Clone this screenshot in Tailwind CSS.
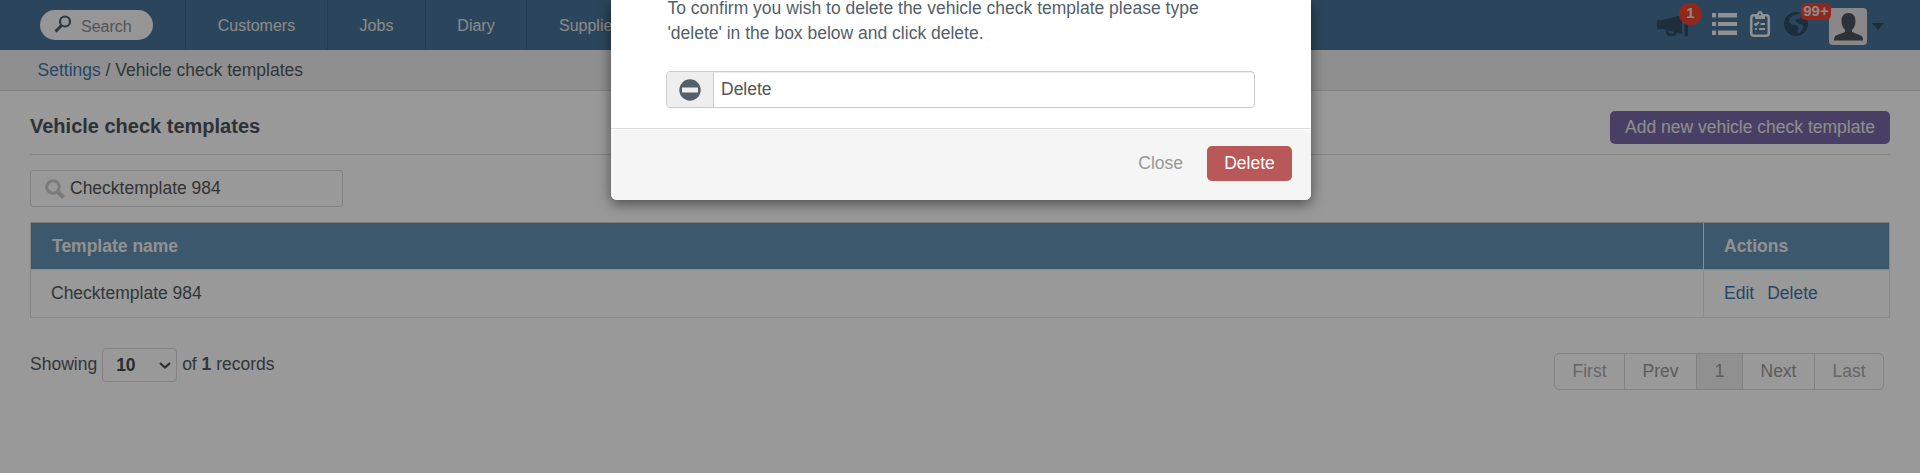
<!DOCTYPE html>
<html lang="en">
<head>
<meta charset="utf-8">
<title>Vehicle check templates</title>
<script src="https://cdn.jsdelivr.net/npm/@tailwindcss/browser@4"></script>
</head>
<body class="h-[473px] overflow-hidden bg-white font-['Liberation_Sans',Arial,sans-serif] text-[17.5px] leading-[25px] text-[#505a63]">
<header class="flex h-[50px] items-stretch justify-between bg-[#497699] text-base text-[#e6e6e6]">
  <div class="flex">
    <div class="flex w-[186px] items-center border-r border-[#3d6585] pl-10">
      <div class="flex h-[30px] w-[113px] items-center rounded-full bg-[#fafaff] text-[#8c8c8c]">
        <svg class="mb-0.5 ml-[14px] h-[18px] w-[18px]" viewBox="0 0 18 18" fill="none" stroke="#505a68" stroke-width="2.2"><circle cx="11" cy="6.5" r="5"/><path d="M7.5 10.5 1.5 16.5" stroke-width="3"/></svg>
        <span class="ml-[9px] pt-[3px]">Search</span>
      </div>
    </div>
    <nav class="flex">
      <a class="flex w-[142px] items-center justify-center border-r border-[#3d6585] pt-0.5">Customers</a>
      <a class="flex w-[98px] items-center justify-center border-r border-[#3d6585] pt-0.5">Jobs</a>
      <a class="flex w-[101px] items-center justify-center border-r border-[#3d6585] pt-0.5">Diary</a>
      <a class="flex items-center pl-8 pt-0.5">Suppliers</a>
    </nav>
  </div>
  <div class="flex pr-[36px]">
    <div class="relative w-[55px]">
      <svg class="mt-[15px] h-[23px] w-8" viewBox="0 0 32 23" fill="#2f4c64"><path d="M0 6q0-1.500 1.500-1.500L4 5.500 25 0v19L4 13.500l-2.500 1Q0 14.500 0 13zM27.500 0h3.500v21.500h-3.500z"/><path d="M10 15q0 5 4.500 5t4-4" fill="none" stroke="#2f4c64" stroke-width="3"/></svg>
      <span class="absolute left-[22px] top-[3px] flex h-[22px] w-[23px] items-center justify-center rounded-full bg-[#f4442e] pb-0.5 text-[15px] font-bold">1</span>
    </div>
    <svg class="mt-[13px] h-[22px] w-[25px]" viewBox="0 0 25 22" fill="#f2f2f2"><path d="M0 0h4v4.500H0zM6 0h19v4.500H6zM0 9h4v4H0zM6 9h19v4H6zM0 17.500h4V22H0zM6 17.500h19V22H6z"/></svg>
    <svg class="ml-[13px] mt-[11px] h-[26px] w-5" viewBox="0 0 20 26"><rect x="1.250" y="4.250" width="17.500" height="20.500" rx="2.500" fill="none" stroke="#f2f2f2" stroke-width="2.500"/><path d="M5 8V4h2q0-4 3-4t3 4h2v4z" fill="#f2f2f2"/><circle cx="10" cy="3.500" r="1" fill="#497699"/><path d="m4.500 12.500 1.500 1.500 3-3M10.500 13H15M5 18h2M9 18h6" fill="none" stroke="#f2f2f2" stroke-width="2"/></svg>
    <div class="relative ml-[14px] w-[45px]">
      <svg class="mt-3 h-6 w-6" viewBox="0 0 24 24"><circle cx="12" cy="12" r="12" fill="#2f4c64"/><path d="M13.500 2.500 9 3.500 5.500 6.500 5 10l3 2.500 4 .5 2.500 2.500-1 3 .5 3.500 3-2.500 2.500-4-1-2.500-4-1.500-3-2.500 1-2 3.500-.5 1-2-1-2 2-1.500z" fill="#497699"/></svg>
      <span class="absolute left-[17px] top-[3px] flex h-[17px] w-[30px] items-center justify-center rounded-[5px] bg-[#f4442e] text-[15px] font-bold">99+</span>
    </div>
    <div class="mt-2 flex h-[37px] w-[38px] items-center justify-center rounded-[4px] bg-[#e4e2e2]">
      <svg class="h-7 w-[29px]" viewBox="0 0 29 28" fill="#4a545c"><path d="M14.500 0C10 0 7.500 3 7.500 8c0 4 1.500 7 3.500 9v2L2 22.500Q0 23.500 0 27.500h29q0-4-2-5L18 19v-2c2-2 3.500-5 3.500-9 0-5-2.500-8-7-8z"/></svg>
    </div>
    <svg class="ml-[5px] mt-[23px] h-[7px] w-3" viewBox="0 0 12 7" fill="#2f4c64"><path d="M0 0h12L6 7z"/></svg>
  </div>
</header>

<div class="h-[41px] border-b border-[#d8d8d8] bg-[#eeeeee] pl-[37.5px] pt-2"><a class="text-[#3f76ae]">Settings</a> / Vehicle check templates</div>

<main class="px-[30px]">
  <div class="flex h-16 items-start justify-between border-b border-[#dadada] pt-5">
    <h1 class="pt-[3px] text-[20px] font-bold leading-[25px] text-[#4a545c]">Vehicle check templates</h1>
    <a class="flex h-[33px] w-[280px] justify-center rounded-[5px] bg-[#7a6aa8] pt-1 text-[#ededed]">Add new vehicle check template</a>
  </div>
  <div class="mt-[15px] flex h-[37px] w-[313px] items-center rounded-[3px] border border-[#d9d9d9]">
    <svg class="ml-[14px] h-5 w-5" viewBox="0 0 20 20" fill="none" stroke="#cbcbcb" stroke-width="3"><circle cx="8" cy="8" r="6.200"/><path d="m12.500 12.500 6 6" stroke-width="4"/></svg>
    <span class="ml-[5px] text-[#555]">Checktemplate 984</span>
  </div>
  <div class="mt-[15px] grid grid-cols-[1fr_186px] border-l border-t border-[#dcdcdc] border-t-[#cdc8c5]">
    <div class="h-[47px] border-b border-r border-[#ececec] bg-[#6593b4] pl-[21px] pt-[11px] font-bold text-[#f2f2f2]">Template name</div>
    <div class="h-[47px] border-b border-r border-[#dcdcdc] bg-[#6593b4] pl-5 pt-[11px] font-bold text-[#f2f2f2]">Actions</div>
    <div class="h-12 border-b border-r border-[#e8e8e8] pl-5 pt-[11px]">Checktemplate 984</div>
    <div class="flex h-12 gap-[13px] border-b border-r border-[#e8e8e8] pl-5 pt-[11px] text-[#3f76ae]"><a>Edit</a><a>Delete</a></div>
  </div>
  <div class="flex justify-between pr-[6px] pt-[30px]">
    <div class="flex h-[34px]">
      <span class="pt-1">Showing</span>
      <div class="ml-[5px] flex w-[75px] items-center justify-between rounded-[4px] border border-[#d9d9d9] pl-[13px] pr-[5px] font-bold text-[#4a4a4a]">10
        <svg class="h-[7px] w-3" viewBox="0 0 12 7" fill="none" stroke="#4a4a4a" stroke-width="2.200"><path d="m1 1 5 4.500L11 1"/></svg>
      </div>
      <span class="ml-[5px] pt-1">of <b>1</b> records</span>
    </div>
    <div class="mt-[5px] flex h-[37px] w-[330px] rounded-[5px] border border-[#d9d9d9] text-[#999] [&>*]:flex [&>*]:items-center [&>*]:justify-center">
      <a class="w-[70px] border-r border-[#d9d9d9] text-[#aaa]">First</a>
      <a class="w-[72px] border-r border-[#d9d9d9]">Prev</a>
      <a class="w-[46px] border-r border-[#d9d9d9] bg-[#f0f0f0]">1</a>
      <a class="w-[72px] border-r border-[#d9d9d9]">Next</a>
      <a class="flex-1 text-[#aaa]">Last</a>
    </div>
  </div>
</main>

<div class="absolute inset-0 bg-black/40"></div>
<div class="absolute left-[611px] top-0 h-[200px] w-[700px] rounded-b-[6px] bg-white shadow-[0_4px_14px_rgba(0,0,0,0.5)]">
  <div class="flex h-32 flex-col pl-[55px]">
    <p class="-mt-1 ml-[1.5px] w-[560px] text-[#535f69]">To confirm you wish to delete the vehicle check template please type<br>'delete' in the box below and click delete.</p>
    <div class="mt-[25px] flex h-[37px] w-[589px] rounded-[4px] border border-[#ccc] shadow-[inset_0_1px_1px_rgba(0,0,0,0.075)]">
      <div class="flex w-[47px] items-center justify-center rounded-l-[3px] border-r border-[#ccc] bg-[#eee]">
        <svg class="h-[22px] w-[22px]" viewBox="0 0 22 22"><circle cx="11" cy="11" r="10.700" fill="#535f69"/><path d="M3 8.500h16v5H3z" fill="#eee"/></svg>
      </div>
      <span class="pl-[7px] pt-[5px] text-[#555]">Delete</span>
    </div>
  </div>
  <div class="flex h-[72px] justify-end rounded-b-[6px] border-t border-[#ddd] bg-[#f5f5f5] pr-[19px] pt-[17px] shadow-[inset_0_1px_0_#fff]">
    <span class="pt-[5px] text-[#999]">Close</span>
    <a class="ml-6 flex h-[35px] w-[85px] justify-center rounded-[5px] bg-[#b95858] pt-[5px] text-white">Delete</a>
  </div>
</div>
</body>
</html>
